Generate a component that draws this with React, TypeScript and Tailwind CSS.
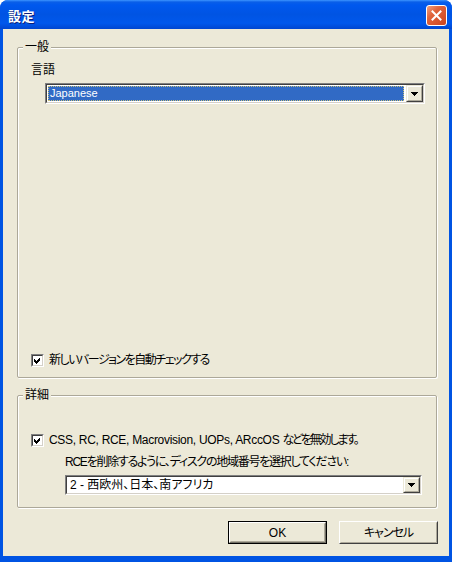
import React from "react";

const JP = "font-['Liberation_Sans','Noto_Sans_CJK_JP',sans-serif] [font-feature-settings:'palt']";

function Checkbox() {
  return (
    <div className="w-[13px] h-[13px] border border-t-[#808080] border-l-[#808080] border-b-white border-r-white shrink-0">
      <div className="w-full h-full bg-white border border-t-[#404040] border-l-[#404040] border-b-[#d4d0c8] border-r-[#d4d0c8] flex items-center justify-center">
        <svg width="7" height="7" viewBox="0 0 7 7" shapeRendering="crispEdges">
          <path d="M0 2 L2 4 L6 0 L6 3 L2 7 L0 5 Z" fill="#000" />
        </svg>
      </div>
    </div>
  );
}

function DropButton() {
  return (
    <div className="w-[17px] h-full border border-t-[#ece9d8] border-l-[#ece9d8] border-b-[#404040] border-r-[#404040] shrink-0">
      <div className="w-full h-full bg-[#ece9d8] border border-t-white border-l-white border-b-[#aca899] border-r-[#aca899] flex items-center justify-center">
        <svg width="7" height="4" viewBox="0 0 7 4" shapeRendering="crispEdges">
          <path d="M0 0 H7 L3.5 4 Z" fill="#000" />
        </svg>
      </div>
    </div>
  );
}

function Combo({ className, text, selected }: { className: string; text: string; selected?: boolean }) {
  return (
    <div className={`${className} border border-t-[#808080] border-l-[#808080] border-b-white border-r-white`}>
      <div className="w-full h-full bg-white border border-t-[#404040] border-l-[#404040] border-b-[#d4d0c8] border-r-[#d4d0c8] flex items-stretch">
        <div className="flex-1 flex items-center p-[1px] pr-[2px]">
          {selected ? (
            <div className="w-full h-full bg-[#316ac5] border border-dotted border-[#c9c07a] flex items-center pl-[1px] text-white text-[11px] font-['Liberation_Sans',sans-serif] leading-none">
              {text}
            </div>
          ) : (
            <div className={`w-full h-full flex items-center pl-[2px] text-black text-[12px] leading-none ${JP}`}>{text}</div>
          )}
        </div>
        <DropButton />
      </div>
    </div>
  );
}

function WinButton({ label, isDefault }: { label: string; isDefault?: boolean }) {
  if (isDefault) {
    return (
      <div className="w-[99px] h-[23px] border border-black">
        <div className="w-full h-full border border-t-white border-l-white border-b-[#716f64] border-r-[#716f64] bg-[#ece9d8]">
          <div className={`w-full h-full border border-t-[#ece9d8] border-l-[#ece9d8] border-b-[#aca899] border-r-[#aca899] flex items-center justify-center text-[12px] text-black ${JP}`}>
            {label}
          </div>
        </div>
      </div>
    );
  }
  return (
    <div className="w-[99px] h-[23px] border border-t-white border-l-white border-b-[#404040] border-r-[#404040] bg-[#ece9d8]">
      <div className={`w-full h-full border border-t-[#ece9d8] border-l-[#ece9d8] border-b-[#aca899] border-r-[#aca899] flex items-center justify-center text-[12px] text-black tracking-[-1px] ${JP}`}>
        {label}
      </div>
    </div>
  );
}

function GroupLabel({ text }: { text: string }) {
  return (
    <div className={`absolute top-[-8px] left-[5px] px-[2px] bg-[#ece9d8] text-[12px] leading-[14px] text-black ${JP}`}>
      {text}
    </div>
  );
}

export default function App() {
  return (
    <div className="w-[452px] h-[562px] flex flex-col bg-[#0054e3] rounded-t-[8px] overflow-hidden">
      {/* Title bar */}
      <div className="h-[29px] shrink-0 flex items-center pl-[8px] pr-[5px] bg-[linear-gradient(to_bottom,#3d95ff_0px,#0a5fe8_2px,#0058ee_5px,#0054e3_50%,#0058ec_80%,#0046d0_100%)]">
        <div className="pt-[2px] text-[13px] font-bold text-white tracking-[0.5px] font-['Noto_Sans_CJK_JP',sans-serif] [text-shadow:1px_1px_0_#0a1e7a]">
          設定
        </div>
        <div className="ml-auto mt-[1px] w-[21px] h-[21px] rounded-[3px] border border-white bg-[linear-gradient(135deg,#f0a080_0%,#e0643c_35%,#cc4420_100%)] flex items-center justify-center">
          <svg width="11" height="11" viewBox="0 0 11 11">
            <path d="M1.5 1.5 L9.5 9.5 M9.5 1.5 L1.5 9.5" stroke="#fff" strokeWidth="2" strokeLinecap="square" />
          </svg>
        </div>
      </div>

      {/* Client area */}
      <div className="flex-1 mx-[3px] mb-[6px] bg-[#ece9d8] flex flex-col">
        {/* Group 1 */}
        <div className="relative mt-[18px] ml-[14px] w-[420px] h-[331px] border border-[#aca899] rounded-[2px] shadow-[inset_1px_1px_0_#fff,1px_1px_0_#fff] flex flex-col">
          <GroupLabel text="一般" />
          <div className={`pt-[15px] pl-[13px] text-[12px] leading-[14px] text-black ${JP}`}>言語</div>
          <div className="mt-[6px] ml-[27px]">
            <Combo className="w-[380px] h-[21px]" text="Japanese" selected />
          </div>
          <div className="mt-auto mb-[10px] ml-[13px] flex items-center gap-[5px] h-[14px]">
            <Checkbox />
            <span className={`text-[12px] leading-[14px] text-black tracking-[-1.5px] whitespace-nowrap ${JP}`}>新しいバージョンを自動チェックする</span>
          </div>
        </div>

        {/* Group 2 */}
        <div className="relative mt-[17px] ml-[14px] w-[420px] h-[113px] border border-[#aca899] rounded-[2px] shadow-[inset_1px_1px_0_#fff,1px_1px_0_#fff] flex flex-col">
          <GroupLabel text="詳細" />
          <div className="mt-[37px] ml-[13px] flex items-center gap-[5px] h-[14px]">
            <Checkbox />
            <span className={`text-[12px] leading-[14px] text-black tracking-[-0.3px] whitespace-nowrap ${JP}`}>
              CSS, RC, RCE, Macrovision, UOPs, ARccOS <span className="tracking-[-2.2px]">などを無効します。</span>
            </span>
          </div>
          <div className={`mt-[8px] ml-[47px] text-[12px] leading-[14px] text-black tracking-[-1.25px] whitespace-nowrap ${JP}`}>
            RCEを削除するように、ディスクの地域番号を選択してください:
          </div>
          <div className="mt-[6px] ml-[47px]">
            <Combo className="w-[357px] h-[20px]" text="2 - 西欧州、日本、南アフリカ" />
          </div>
        </div>

        {/* Buttons */}
        <div className="mt-[13px] mr-[11px] flex justify-end gap-[12px]">
          <WinButton label="OK" isDefault />
          <WinButton label="キャンセル" />
        </div>
      </div>
    </div>
  );
}
